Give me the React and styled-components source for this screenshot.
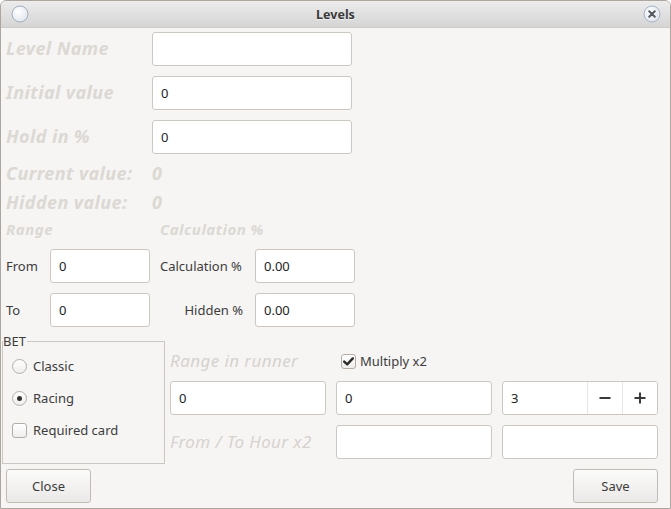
import React from "react";
import styled, { createGlobalStyle } from "styled-components";

const Global = createGlobalStyle`
  html, body { margin: 0; padding: 0; background: #ffffff; }
  * { box-sizing: border-box; }
  body { font-family: "Noto Sans", "DejaVu Sans", sans-serif; }
`;

const Window = styled.div`
  width: 671px;
  height: 509px;
  border: 1px solid #aca69f;
  border-radius: 6px 6px 0 0;
  background: #f6f5f4;
  overflow: hidden;
  display: flex;
  flex-direction: column;
`;

const TitleBar = styled.div`
  height: 27px;
  flex: none;
  display: grid;
  grid-template-columns: 40px 1fr 40px;
  align-items: center;
  background: linear-gradient(#ececec, #d5d5d5);
  border-bottom: 1px solid #cfcbc7;
`;

const Title = styled.div`
  text-align: center;
  font-weight: 700;
  font-size: 12.5px;
  color: #3a3a3a;
  text-shadow: 0 1px 0 rgba(255, 255, 255, 0.6);
`;

const TitleIcon = styled.svg`
  justify-self: ${(p) => (p.$right ? "end" : "start")};
  margin: ${(p) => (p.$right ? "0 9px 0 0" : "0 0 0 10px")};
  display: block;
`;

const Content = styled.div`
  flex: 1;
  display: flex;
  flex-direction: column;
  padding: 4px 12px 5px 5px;
`;

const FieldRow = styled.div`
  display: grid;
  grid-template-columns: 146px 200px;
  align-items: center;
  height: 34px;
  margin-top: ${(p) => p.$mt || 0}px;
`;

const BigLabel = styled.div`
  font-size: 18px;
  font-weight: 700;
  font-style: italic;
  letter-spacing: 0.4px;
  color: #dcd8d3;
  white-space: nowrap;
  padding-bottom: 2px;
`;

const InfoRow = styled.div`
  display: grid;
  grid-template-columns: 146px auto;
  align-items: center;
  height: 20px;
  margin-top: ${(p) => p.$mt}px;
`;

const HeadRow = styled.div`
  display: grid;
  grid-template-columns: 154px auto;
  align-items: center;
  height: 18px;
  margin-top: 9px;
`;

const Heading = styled.div`
  font-size: 15px;
  font-weight: 700;
  font-style: italic;
  letter-spacing: 0.5px;
  color: #dcd8d3;
  white-space: nowrap;
  padding-bottom: 2px;
`;

const RangeGrid = styled.div`
  display: grid;
  grid-template-columns: 44px 100px 10px 83px 12px 100px;
  grid-auto-rows: 34px;
  row-gap: 10px;
  align-items: center;
  margin-top: 12px;
`;

const Label = styled.div`
  font-size: 13px;
  color: #3c3c3c;
  white-space: nowrap;
  text-align: ${(p) => (p.$right ? "right" : "left")};
  grid-column: ${(p) => p.$col || "auto"};
`;

const Input = styled.input`
  width: 100%;
  height: 34px;
  border: 1px solid #cdc7c2;
  border-radius: 3px;
  background: #ffffff;
  font-family: "Noto Sans", "DejaVu Sans", sans-serif;
  font-size: 13px;
  color: #1e1e1e;
  padding: 0 8px;
  outline: none;
  grid-column: ${(p) => p.$col || "auto"};
`;

const Bottom = styled.div`
  display: flex;
  align-items: flex-start;
  margin: 6px 0 0 -4px;
`;

const Frame = styled.fieldset`
  width: 164px;
  height: 131px;
  margin: 0;
  padding: 1px 0 0 0;
  border: 1px solid #cdc7c2;
  border-radius: 0;
`;

const Legend = styled.legend`
  padding: 0 1px 0 0;
  margin: 0;
  font-size: 13px;
  line-height: 16px;
  color: #3c3c3c;
`;

const Option = styled.label`
  display: flex;
  align-items: center;
  gap: 6px;
  height: 32px;
  padding-left: 9px;
  font-size: 13px;
  color: #3c3c3c;
`;

const Radio = styled.span`
  width: 15px;
  height: 15px;
  border-radius: 50%;
  border: 1px solid #b4ada6;
  background: linear-gradient(#ffffff, #efeeec);
  box-shadow: 0 1px 0 rgba(255, 255, 255, 0.8);
  display: flex;
  align-items: center;
  justify-content: center;
  &::after {
    content: "";
    width: 5px;
    height: 5px;
    border-radius: 50%;
    background: ${(p) => (p.$checked ? "#333333" : "transparent")};
  }
`;

const Box = styled.span`
  width: 15px;
  height: 15px;
  flex: none;
  border-radius: 3px;
  border: 1px solid #b4ada6;
  background: linear-gradient(#ffffff, #efeeec);
  display: flex;
  align-items: center;
  justify-content: center;
`;

const RightGrid = styled.div`
  margin: 18px 0 0 5px;
  display: grid;
  grid-template-columns: repeat(3, 156px);
  grid-template-rows: 20px 34px 34px;
  column-gap: 10px;
  row-gap: 10px;
  align-items: center;
`;

const SoftLabel = styled.div`
  font-size: 17px;
  font-style: italic;
  letter-spacing: 0.4px;
  color: #d6d2ce;
  white-space: nowrap;
  padding-bottom: 2px;
`;

const CheckOption = styled.label`
  display: flex;
  align-items: center;
  gap: 4px;
  padding-left: 5px;
  font-size: 13px;
  color: #3c3c3c;
  white-space: nowrap;
`;

const Spin = styled.div`
  display: flex;
  height: 34px;
  border: 1px solid #cdc7c2;
  border-radius: 3px;
  background: #ffffff;
  overflow: hidden;
`;

const SpinField = styled.input`
  flex: 1;
  min-width: 0;
  border: none;
  outline: none;
  background: transparent;
  font-family: "Noto Sans", "DejaVu Sans", sans-serif;
  font-size: 13px;
  color: #1e1e1e;
  padding: 0 8px;
`;

const SpinButton = styled.button`
  width: 35px;
  flex: none;
  border: none;
  border-left: 1px solid #e8e5e2;
  background: #ffffff;
  display: flex;
  align-items: center;
  justify-content: center;
  padding: 0;
`;

const Footer = styled.div`
  margin-top: auto;
  display: flex;
  justify-content: space-between;
`;

const Button = styled.button`
  width: 85px;
  height: 34px;
  border: 1px solid #c2bbb4;
  border-radius: 3px;
  background: linear-gradient(#fbfbfa, #ebe9e7);
  font-family: "Noto Sans", "DejaVu Sans", sans-serif;
  font-size: 13px;
  color: #3c3c3c;
  padding: 0;
`;

const CheckMark = () => (
  <svg width="11" height="9" viewBox="0 0 11 9">
    <path d="M1.2 4.6 L4.2 7.4 L9.8 1.4" fill="none" stroke="#2b2b2b" strokeWidth="2.4" strokeLinecap="round" strokeLinejoin="round" />
  </svg>
);

export default function App() {
  return (
    <>
      <Global />
      <Window>
        <TitleBar>
          <TitleIcon width="18" height="18" viewBox="0 0 18 18">
            <defs>
              <radialGradient id="lg" cx="0.4" cy="0.35" r="0.7">
                <stop offset="0" stopColor="#ffffff" />
                <stop offset="1" stopColor="#dfe4ec" />
              </radialGradient>
            </defs>
            <circle cx="9" cy="9" r="8" fill="url(#lg)" stroke="#a3adc0" strokeWidth="1" />
          </TitleIcon>
          <Title>Levels</Title>
          <TitleIcon $right width="18" height="18" viewBox="0 0 18 18">
            <defs>
              <radialGradient id="cg" cx="0.4" cy="0.35" r="0.7">
                <stop offset="0" stopColor="#ffffff" />
                <stop offset="1" stopColor="#dde2ea" />
              </radialGradient>
            </defs>
            <circle cx="9" cy="9" r="8" fill="url(#cg)" stroke="#a9b3c5" strokeWidth="1" />
            <path d="M6.2 6.2 L11.8 11.8 M11.8 6.2 L6.2 11.8" stroke="#555a60" strokeWidth="2" strokeLinecap="round" />
          </TitleIcon>
        </TitleBar>
        <Content>
          <FieldRow>
            <BigLabel>Level Name</BigLabel>
            <Input defaultValue="" />
          </FieldRow>
          <FieldRow $mt={10}>
            <BigLabel>Initial value</BigLabel>
            <Input defaultValue="0" />
          </FieldRow>
          <FieldRow $mt={10}>
            <BigLabel>Hold in %</BigLabel>
            <Input defaultValue="0" />
          </FieldRow>
          <InfoRow $mt={7}>
            <BigLabel>Current value:</BigLabel>
            <BigLabel>0</BigLabel>
          </InfoRow>
          <InfoRow $mt={9}>
            <BigLabel>Hidden value:</BigLabel>
            <BigLabel>0</BigLabel>
          </InfoRow>
          <HeadRow>
            <Heading>Range</Heading>
            <Heading>Calculation %</Heading>
          </HeadRow>
          <RangeGrid>
            <Label>From</Label>
            <Input defaultValue="0" />
            <Label $col="4">Calculation %</Label>
            <Input $col="6" defaultValue="0.00" />
            <Label>To</Label>
            <Input defaultValue="0" />
            <Label $col="4" $right>Hidden %</Label>
            <Input $col="6" defaultValue="0.00" />
          </RangeGrid>
          <Bottom>
            <Frame>
              <Legend>BET</Legend>
              <Option>
                <Radio />
                Classic
              </Option>
              <Option>
                <Radio $checked />
                Racing
              </Option>
              <Option>
                <Box />
                Required card
              </Option>
            </Frame>
            <RightGrid>
              <SoftLabel>Range in runner</SoftLabel>
              <CheckOption>
                <Box>
                  <CheckMark />
                </Box>
                Multiply x2
              </CheckOption>
              <div />
              <Input defaultValue="0" />
              <Input defaultValue="0" />
              <Spin>
                <SpinField defaultValue="3" />
                <SpinButton aria-label="decrease">
                  <svg width="12" height="12" viewBox="0 0 12 12">
                    <path d="M0.5 6 H11.5" stroke="#3a3a3a" strokeWidth="2" />
                  </svg>
                </SpinButton>
                <SpinButton aria-label="increase">
                  <svg width="12" height="12" viewBox="0 0 12 12">
                    <path d="M0.5 6 H11.5 M6 0.5 V11.5" stroke="#3a3a3a" strokeWidth="2" />
                  </svg>
                </SpinButton>
              </Spin>
              <SoftLabel>From / To Hour x2</SoftLabel>
              <Input defaultValue="" />
              <Input defaultValue="" />
            </RightGrid>
          </Bottom>
          <Footer>
            <Button>Close</Button>
            <Button>Save</Button>
          </Footer>
        </Content>
      </Window>
    </>
  );
}
